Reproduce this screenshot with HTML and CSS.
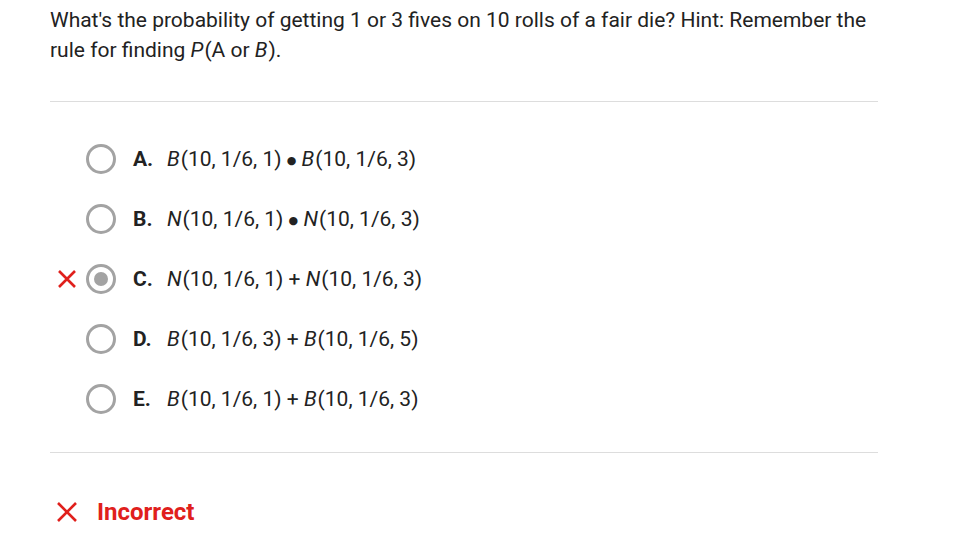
FILE: index.html
```html
<!DOCTYPE html>
<html>
<head>
<meta charset="utf-8">
<link rel="stylesheet" href="styles.css">
</head>
<body>
<div class="page">
  <p class="question">What's the probability of getting 1 or 3 fives on 10 rolls of a fair die? Hint: Remember the rule for finding <i class="var">P</i>(A or <i class="var">B</i>).</p>
  <hr class="divider">
  <ul class="options">
    <li class="option">
      <span class="mark"></span>
      <span class="radio"></span>
      <span class="letter">A.</span>
      <span class="text"><i class="var">B</i>(10, 1/6, 1) <span class="bullet">●</span> <i class="var">B</i>(10, 1/6, 3)</span>
    </li>
    <li class="option">
      <span class="mark"></span>
      <span class="radio"></span>
      <span class="letter">B.</span>
      <span class="text"><i class="var">N</i>(10, 1/6, 1) <span class="bullet">●</span> <i class="var">N</i>(10, 1/6, 3)</span>
    </li>
    <li class="option">
      <span class="mark">
        <svg class="x-icon" viewBox="0 0 20 20" width="20" height="20"><path d="M2 2 L18 18 M18 2 L2 18" stroke="#e0201c" stroke-width="2.6" fill="none"/></svg>
      </span>
      <span class="radio selected"><span class="dot"></span></span>
      <span class="letter">C.</span>
      <span class="text"><i class="var">N</i>(10, 1/6, 1) + <i class="var">N</i>(10, 1/6, 3)</span>
    </li>
    <li class="option">
      <span class="mark"></span>
      <span class="radio"></span>
      <span class="letter">D.</span>
      <span class="text"><i class="var">B</i>(10, 1/6, 3) + <i class="var">B</i>(10, 1/6, 5)</span>
    </li>
    <li class="option">
      <span class="mark"></span>
      <span class="radio"></span>
      <span class="letter">E.</span>
      <span class="text"><i class="var">B</i>(10, 1/6, 1) + <i class="var">B</i>(10, 1/6, 3)</span>
    </li>
  </ul>
  <hr class="divider">
  <div class="result">
    <svg class="result-icon" viewBox="0 0 22 22" width="22" height="22"><path d="M2 2 L20 20 M20 2 L2 20" stroke="#e0201c" stroke-width="2.6" fill="none"/></svg>
    <span class="result-text">Incorrect</span>
  </div>
</div>
</body>
</html>
```

FILE: styles.css
```css
html, body {
  margin: 0;
  padding: 0;
  background: #ffffff;
}

.page {
  width: 828px;
  padding-left: 50px;
  font-family: Roboto, "Liberation Sans", sans-serif;
  color: #222222;
}

.question {
  margin: 0;
  padding-top: 5px;
  font-size: 21px;
  line-height: 30px;
}

.var {
  padding-right: 1px;
}

.divider {
  margin: 36px 0 0 0;
  border: none;
  border-top: 1px solid #dddddd;
  height: 0;
}

.options {
  list-style: none;
  margin: 0;
  padding: 27px 0 23px 0;
}

.option {
  display: flex;
  align-items: center;
  height: 60px;
  font-size: 21px;
}

.mark {
  width: 36px;
  height: 20px;
  display: flex;
  align-items: center;
}

.x-icon {
  margin-left: 7px;
}

.radio {
  width: 30px;
  height: 30px;
  box-sizing: border-box;
  border: 3px solid #a3a3a3;
  border-radius: 50%;
  display: flex;
  align-items: center;
  justify-content: center;
}

.dot {
  width: 14px;
  height: 14px;
  border-radius: 50%;
  background: #a3a3a3;
}

.letter {
  font-weight: bold;
  width: 34px;
  margin-left: 17px;
}

.bullet {
  font-family: "DejaVu Sans", sans-serif;
  font-size: 11px;
  vertical-align: 2px;
}

.options + .divider {
  margin-top: 0;
}

.result {
  display: flex;
  align-items: center;
  gap: 19px;
  margin-top: 45px;
  padding-left: 6px;
}

.result-text {
  color: #e0201c;
  font-weight: bold;
  font-size: 24px;
  line-height: 28px;
}
```
